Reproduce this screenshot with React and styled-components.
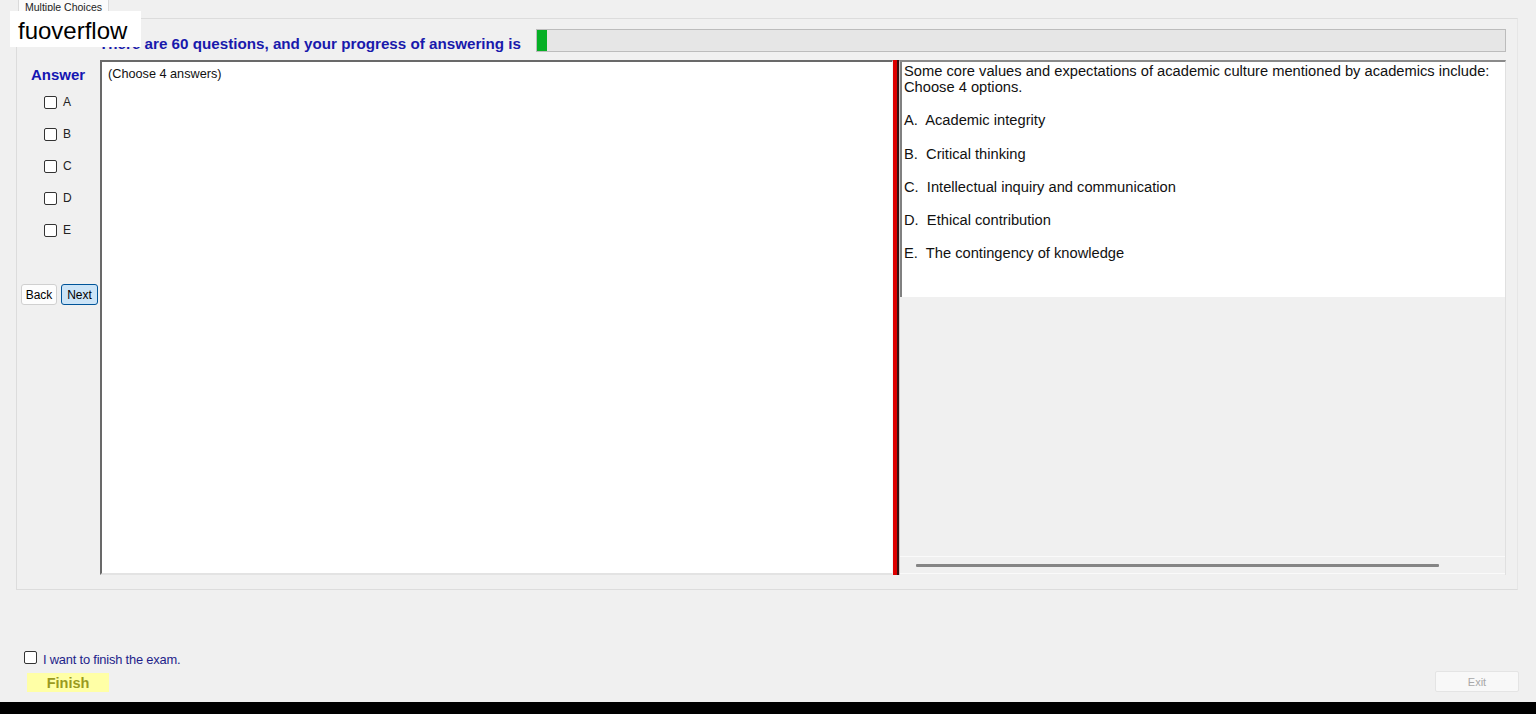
import React from "react";
import styled, { createGlobalStyle } from "styled-components";

const Global = createGlobalStyle`
  html, body { margin: 0; padding: 0; background: #f0f0f0; }
  body { font-family: "Liberation Sans", Arial, sans-serif; color: #000; }
  * { box-sizing: border-box; }
`;

const Page = styled.div`
  position: relative;
  height: 714px;
  width: 1536px;
  display: flex;
  flex-direction: column;
  overflow: hidden;
  background: #f0f0f0;
`;

const Watermark = styled.div`
  position: absolute;
  left: 10px;
  top: 11px;
  width: 131px;
  height: 36px;
  background: #fff;
  font-size: 24px;
  line-height: 36px;
  padding: 2px 0 0 8px;
  color: #000;
  z-index: 5;
`;

const TabStrip = styled.div`
  height: 18px;
  padding-left: 18px;
  display: flex;
  align-items: flex-start;
`;

const Tab = styled.div`
  height: 15px;
  padding: 1px 6px 0;
  background: #fbfbfb;
  border: 1px solid #dadada;
  border-top: none;
  font-size: 10.5px;
  line-height: 12px;
  color: #222;
`;

const TabPanel = styled.div`
  margin: 0 18px 0 16px;
  height: 572px;
  border: 1px solid #dcdcdc;
  border-right-color: #e6e6e6;
  background: #f0f0f0;
  padding: 10px 11px 14px 3px;
  display: flex;
  flex-direction: column;
`;

const HeaderRow = styled.div`
  height: 23px;
  display: flex;
  align-items: center;
  padding-left: 79px;
`;

const HeaderText = styled.div`
  font-weight: bold;
  font-size: 15.2px;
  color: #1919ac;
  white-space: nowrap;
  margin-right: 15px;
  padding-top: 6px;
`;

const Progress = styled.div`
  flex: 1;
  height: 23px;
  background: #e6e6e6;
  border: 1px solid #bcbcbc;
  position: relative;
`;

const ProgressFill = styled.div`
  height: 100%;
  background: #06b025;
`;

const Body = styled.div`
  margin-top: 8px;
  height: 515px;
  display: flex;
`;

const LeftCol = styled.div`
  width: 80px;
  display: flex;
  flex-direction: column;
  padding-top: 7px;
`;

const AnswerTitle = styled.div`
  font-weight: bold;
  font-size: 15px;
  color: #1515b2;
  padding-left: 11px;
  line-height: 16px;
  margin-bottom: 9px;
`;

const CheckRow = styled.label`
  display: flex;
  align-items: center;
  height: 32px;
  padding-left: 24px;
  font-size: 12px;
  color: #222;
  gap: 6px;
  margin-top: ${(p) => (p.$first ? "-6px" : "0")};
`;

const Box = styled.span`
  width: 13px;
  height: 13px;
  border: 1px solid #333;
  border-radius: 2px;
  background: #fff;
  flex: none;
`;

const ButtonRow = styled.div`
  display: flex;
  gap: 4px;
  margin-top: 38px;
  padding-left: 1px;
`;

const SmallButton = styled.button`
  height: 21px;
  width: ${(p) => p.$w}px;
  padding: 0;
  font-family: "Liberation Sans", Arial, sans-serif;
  font-size: 12px;
  color: #000;
  background: ${(p) => (p.$active ? "#cce4f7" : "#fdfdfd")};
  border: 1px solid ${(p) => (p.$active ? "#005499" : "#d0d0d0")};
  border-radius: 3px;
`;

const TextArea = styled.div`
  width: 793px;
  background: #fff;
  border-top: 2px solid #696969;
  border-left: 2px solid #696969;
  border-right: 1px solid #f4f4f4;
  border-bottom: 2px solid #e3e3e3;
  padding: 5px 6px;
  font-size: 12.7px;
  color: #111;
`;

const Splitter = styled.div`
  width: 6px;
  background: #dd0000;
  border-right: 2px solid #3a1010;
`;

const RightPanel = styled.div`
  flex: 1;
  display: flex;
  flex-direction: column;
  border-top: 2px solid #8a8a8a;
  border-left: 1px solid #c8c8c8;
  border-right: 1px solid #e0e0e0;
`;

const QuestionBox = styled.div`
  height: 235px;
  background: #fff;
  border-left: 2px solid #808080;
  padding: 1px 3px 1px 2px;
  font-size: 14.7px;
  line-height: 16px;
  color: #111;
`;

const Para = styled.p`
  margin: 0 0 17.25px;
  white-space: pre;
`;

const ScrollArea = styled.div`
  flex: 1;
  display: flex;
  flex-direction: column;
  justify-content: flex-end;
`;

const ScrollTrack = styled.div`
  height: 18px;
  border-top: 1px solid #fafafa;
  border-bottom: 1px solid #fafafa;
  padding: 0 66px 0 16px;
  display: flex;
  align-items: center;
  margin-bottom: 1px;
`;

const ScrollThumb = styled.div`
  flex: 1;
  height: 3px;
  background: #858585;
  border-radius: 1px;
`;

const Footer = styled.div`
  flex: 1;
  display: flex;
  align-items: flex-end;
  justify-content: space-between;
  padding: 0 17px 10px 24px;
`;

const FooterLeft = styled.div`
  display: flex;
  flex-direction: column;
`;

const FinishCheck = styled.label`
  display: flex;
  align-items: flex-start;
  gap: 6px;
  font-size: 12.9px;
  line-height: 15px;
  color: #1e1e8a;
  letter-spacing: -0.2px;
`;

const FinishLabel = styled.span`
  padding-top: 1px;
`;

const FinishButton = styled.button`
  margin-top: 6px;
  margin-left: 3px;
  width: 82px;
  height: 19px;
  border: none;
  background: #ffffa6;
  font-family: "Liberation Sans", Arial, sans-serif;
  font-weight: bold;
  font-size: 14.5px;
  color: #9a9a1e;
  padding: 0;
`;

const ExitButton = styled.button`
  width: 84px;
  height: 21px;
  border: 1px solid #e4e4e4;
  border-radius: 2px;
  background: #f8f8f8;
  font-family: "Liberation Sans", Arial, sans-serif;
  font-size: 11px;
  color: #a8a8a8;
  padding: 0;
`;

const BlackBar = styled.div`
  height: 12px;
  background: #000;
`;

const options = [
  "A.  Academic integrity",
  "B.  Critical thinking",
  "C.  Intellectual inquiry and communication",
  "D.  Ethical contribution",
  "E.  The contingency of knowledge",
];

export default function App() {
  return (
    <Page>
      <Global />
      <Watermark>fuoverflow</Watermark>
      <TabStrip>
        <Tab>Multiple Choices</Tab>
      </TabStrip>
      <TabPanel>
        <HeaderRow>
          <HeaderText>There are 60 questions, and your progress of answering is</HeaderText>
          <Progress>
            <ProgressFill style={{ width: "10px" }} />
          </Progress>
        </HeaderRow>
        <Body>
          <LeftCol>
            <AnswerTitle>Answer</AnswerTitle>
            {["A", "B", "C", "D", "E"].map((l, i) => (
              <CheckRow key={l} $first={i === 0}>
                <Box />
                {l}
              </CheckRow>
            ))}
            <ButtonRow>
              <SmallButton $w={36}>Back</SmallButton>
              <SmallButton $w={37} $active>Next</SmallButton>
            </ButtonRow>
          </LeftCol>
          <TextArea>(Choose 4 answers)</TextArea>
          <Splitter />
          <RightPanel>
            <QuestionBox>
              <Para>
                Some core values and expectations of academic culture mentioned by academics include:
                {"\n"}Choose 4 options.
              </Para>
              {options.map((o) => (
                <Para key={o}>{o}</Para>
              ))}
            </QuestionBox>
            <ScrollArea>
              <ScrollTrack>
                <ScrollThumb />
              </ScrollTrack>
            </ScrollArea>
          </RightPanel>
        </Body>
      </TabPanel>
      <Footer>
        <FooterLeft>
          <FinishCheck>
            <Box />
            <FinishLabel>I want to finish the exam.</FinishLabel>
          </FinishCheck>
          <FinishButton>Finish</FinishButton>
        </FooterLeft>
        <ExitButton>Exit</ExitButton>
      </Footer>
      <BlackBar />
    </Page>
  );
}
